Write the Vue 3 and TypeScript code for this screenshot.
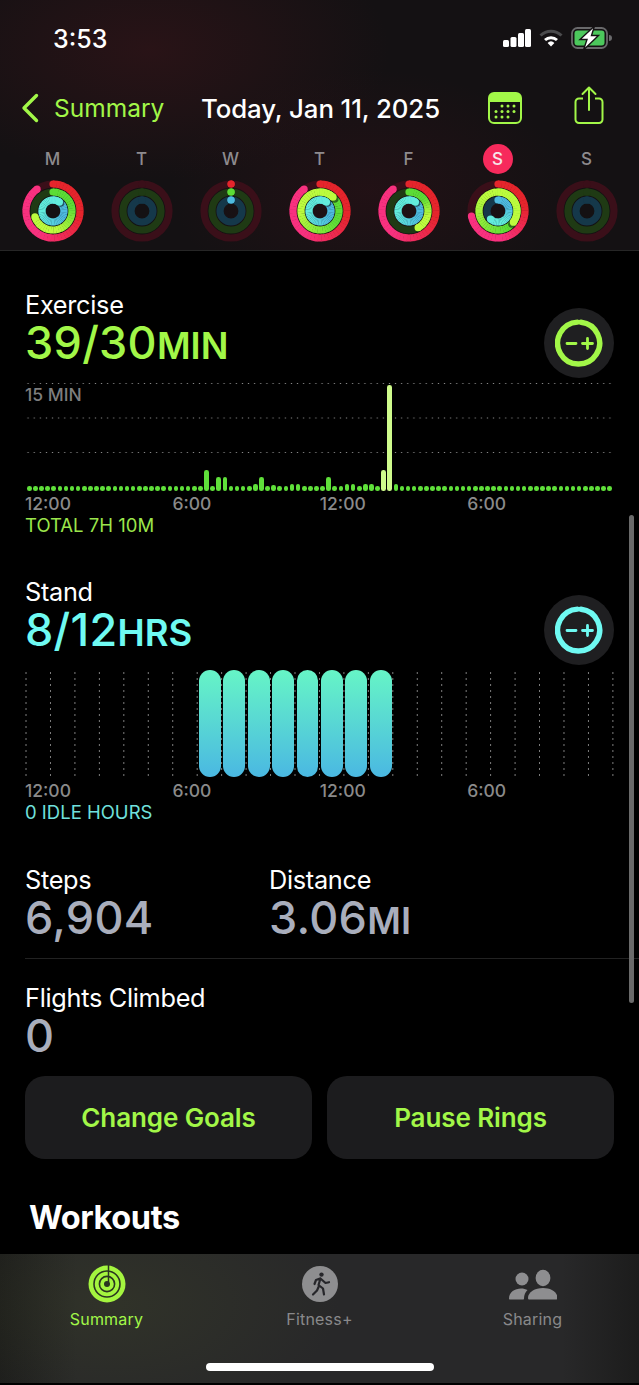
<template>
  <div class="phone">
    <header class="top">
      <div class="status">
        <span class="clock">3:53</span>
        <div class="status-icons">
          <svg width="28" height="18" viewBox="0 0 28 18">
            <rect x="0" y="11" width="6" height="7" rx="1.5" fill="#fff" />
            <rect x="7.5" y="8" width="6" height="10" rx="1.5" fill="#fff" />
            <rect x="15" y="4" width="6" height="14" rx="1.5" fill="#fff" />
            <rect x="22" y="0" width="6" height="18" rx="1.5" fill="#fff" />
          </svg>
          <svg width="24" height="18" viewBox="0 0 24 18">
            <path d="M1.5 6.5a15 15 0 0 1 21 0" fill="none" stroke="#4b4b4d" stroke-width="3" />
            <path d="M6 11a9 9 0 0 1 12 0" fill="none" stroke="#fff" stroke-width="3" />
            <path d="M12 17.500 8.600 13.900a5 5 0 0 1 6.800 0z" fill="#fff" />
          </svg>
          <svg width="41" height="22" viewBox="0 0 41 22">
            <rect x="1" y="1" width="35" height="20" rx="5.500" fill="none" stroke="#69696b" stroke-width="1.800" />
            <rect x="3.500" y="3.500" width="30" height="15" rx="3" fill="#4cc85c" />
            <path d="M38 8a3 3 0 0 1 0 6z" fill="#69696b" />
            <path d="M23.500 -1 9 12.500h7L12.500 23 27.500 8.500h-7z" fill="#fff" stroke="#141113" stroke-width="1.400" />
          </svg>
        </div>
      </div>

      <nav class="nav">
        <div class="back">
          <svg width="20" height="30" viewBox="0 0 20 30">
            <path d="M16.500 2.500 4 15l12.500 12.500" fill="none" stroke="#a2f748" stroke-width="3.400" stroke-linecap="round" stroke-linejoin="round" />
          </svg>
          <span>Summary</span>
        </div>
        <span class="date">Today, Jan 11, 2025</span>
        <svg class="cal" width="34" height="32" viewBox="0 0 34 32">
          <rect x="1" y="1" width="32" height="30" rx="5" fill="none" stroke="#a2f748" stroke-width="2" />
          <path d="M1 6a5 5 0 0 1 5-5h22a5 5 0 0 1 5 5v4H1z" fill="#a2f748" />
          <g fill="#a2f748">
            <circle v-for="d in calDots" :key="d.x + '-' + d.y" :cx="d.x" :cy="d.y" r="1.500" />
          </g>
        </svg>
        <svg class="share" width="30" height="38" viewBox="0 0 30 38">
          <path d="M9 12.500H5a3.500 3.500 0 0 0-3.500 3.500v17.500A3.500 3.500 0 0 0 5 37h20a3.500 3.500 0 0 0 3.500-3.500V16a3.500 3.500 0 0 0-3.500-3.500h-4" fill="none" stroke="#a2f748" stroke-width="2" />
          <path d="M15 24V1.500M8.500 8 15 1.500 21.500 8" fill="none" stroke="#a2f748" stroke-width="2" stroke-linecap="round" stroke-linejoin="round" />
        </svg>
      </nav>

      <div class="week">
        <div v-for="day in days" :key="day.id" class="day">
          <span class="letter" :class="{ today: day.today }">{{ day.letter }}</span>
          <svg width="62" height="62" viewBox="-31 -31 62 62">
            <g v-for="ring in day.rings" :key="ring.r">
              <circle :r="ring.r" fill="none" :stroke="ring.track" stroke-width="7.200" />
              <circle :cx="0" :cy="-ring.r" r="3.600" :fill="ring.from" />
              <path
                v-for="(seg, i) in ring.segments"
                :key="i"
                :d="seg.d"
                :stroke="seg.color"
                fill="none"
                stroke-width="7.200"
              />
              <circle v-if="ring.shadow" :cx="ring.shadow.x" :cy="ring.shadow.y" r="3.800" fill="#000" opacity="0.5" />
              <circle :cx="ring.tip.x" :cy="ring.tip.y" r="3.600" :fill="ring.to" />
            </g>
          </svg>
        </div>
      </div>
    </header>

    <main class="content">
      <section class="exercise">
        <div class="head">
          <div>
            <div class="label">Exercise</div>
            <div class="value lime">39/30<small>MIN</small></div>
          </div>
          <button class="goal" type="button">
            <svg width="48" height="48" viewBox="0 0 48 48">
              <path d="M26 3.200A21 21 0 1 1 22.500 3.100" fill="none" stroke="#a2f748" stroke-width="5.400" stroke-linecap="round" />
              <path d="M12 24.500h9M27.500 24.500h10M32.500 19.500v10" fill="none" stroke="#a2f748" stroke-width="2.800" stroke-linecap="round" />
            </svg>
          </button>
        </div>
        <div class="move-chart">
          <span class="chart-note">15 MIN</span>
          <div class="move-bars">
            <i
              v-for="(bar, i) in moveBars"
              :key="i"
              :class="{ pale: bar.pale }"
              :style="{ height: bar.height + 'px' }"
            ></i>
          </div>
        </div>
        <div class="axis"><span v-for="(t, i) in axis" :key="i">{{ t }}</span></div>
        <div class="total lime-soft">TOTAL 7H 10M</div>
      </section>

      <section class="stand">
        <div class="head">
          <div>
            <div class="label">Stand</div>
            <div class="value cyan">8/12<small>HRS</small></div>
          </div>
          <button class="goal" type="button">
            <svg width="48" height="48" viewBox="0 0 48 48">
              <path d="M26 3.200A21 21 0 1 1 22.500 3.100" fill="none" stroke="#6ffaf2" stroke-width="5.400" stroke-linecap="round" />
              <path d="M12 24.500h9M27.500 24.500h10M32.500 19.500v10" fill="none" stroke="#6ffaf2" stroke-width="2.800" stroke-linecap="round" />
            </svg>
          </button>
        </div>
        <div class="stand-chart">
          <div v-for="h in 24" :key="h" class="slot">
            <i v-if="h > 7 && h <= 15"></i>
          </div>
        </div>
        <div class="axis"><span v-for="(t, i) in axis" :key="i">{{ t }}</span></div>
        <div class="total cyan-soft">0 IDLE HOURS</div>
      </section>

      <section class="metrics">
        <div class="metric-row">
          <div class="metric">
            <div class="label">Steps</div>
            <div class="value grey">6,904</div>
          </div>
          <div class="metric">
            <div class="label">Distance</div>
            <div class="value grey">3.06<small>MI</small></div>
          </div>
        </div>
        <div class="rule"></div>
        <div class="label">Flights Climbed</div>
        <div class="value grey">0</div>
      </section>

      <div class="actions">
        <button type="button">Change Goals</button>
        <button type="button">Pause Rings</button>
      </div>

      <h2>Workouts</h2>
    </main>

    <div class="scrollbar"></div>

    <footer class="tabs">
      <div class="tab-row">
        <div class="tab active">
          <svg width="38" height="38" viewBox="0 0 38 38">
            <circle cx="19" cy="19" r="18.500" fill="#a4f53f" />
            <circle cx="19" cy="19" r="13" fill="none" stroke="#2a3520" stroke-width="1.600" />
            <circle cx="19" cy="19" r="7.600" fill="none" stroke="#2a3520" stroke-width="1.600" />
            <circle cx="19" cy="19" r="3" fill="#2a3520" />
            <path d="M20.500 0v17" stroke="#2a3520" stroke-width="1.500" />
          </svg>
          <span>Summary</span>
        </div>
        <div class="tab">
          <svg width="38" height="38" viewBox="0 0 38 38">
            <circle cx="19" cy="19" r="18" fill="#8e8e90" />
            <circle cx="20.500" cy="9.600" r="2.200" fill="#26262a" />
            <path d="M19.500 13.500 17.500 20l4.500 3.500 1 6M18 21l-2 4.500-4 4M20 14l4.500 4 3.500-.8M19 13.500l-4 1.500-1.500 4" fill="none" stroke="#26262a" stroke-width="2.200" stroke-linecap="round" stroke-linejoin="round" />
          </svg>
          <span>Fitness+</span>
        </div>
        <div class="tab">
          <svg width="48" height="38" viewBox="0 0 48 38">
            <circle cx="13" cy="14" r="6.500" fill="#8e8e90" />
            <ellipse cx="34" cy="13" rx="7.400" ry="8.200" fill="#8e8e90" />
            <path d="M0 33.500c0-6.500 6-10 12-10 2.500 0 4.700.5 6.500 1.600-2.200 2.300-3.500 5-3.500 8.400 0 .8-.3 1-1 1H1c-.7 0-1-.3-1-1z" fill="#8e8e90" />
            <path d="M19 33c0-6 7-10 15-10s14.500 4 14.500 10c0 1-.5 1.500-1.500 1.500H20.500c-1 0-1.500-.5-1.500-1.500z" fill="#8e8e90" />
          </svg>
          <span>Sharing</span>
        </div>
      </div>
      <div class="home"></div>
    </footer>
  </div>
</template>

<script setup lang="ts">
interface Pt {
  x: number
  y: number
}

interface Ring {
  r: number
  track: string
  from: string
  to: string
  segments: { d: string; color: string }[]
  tip: Pt
  shadow: Pt | null
}

const axis = ['12:00', '6:00', '12:00', '6:00']

const palette = [
  { r: 27, track: '#3a0f19', from: '#e5252c', to: '#f8317f' },
  { r: 19, track: '#1f3a14', from: '#5cdc36', to: '#bdfb3e' },
  { r: 11, track: '#15384a', from: '#4fbbe0', to: '#62ecdc' },
]

function hex(c: string): number[] {
  return [1, 3, 5].map((i) => parseInt(c.slice(i, i + 2), 16))
}

function mix(a: string, b: string, t: number): string {
  const [x, y] = [hex(a), hex(b)]
  return `rgb(${x.map((v, i) => Math.round(v + (y[i] - v) * t)).join(',')})`
}

function point(r: number, turn: number): Pt {
  const a = turn * Math.PI * 2
  return { x: r * Math.sin(a), y: -r * Math.cos(a) }
}

function buildRing(index: number, fraction: number): Ring {
  const p = palette[index]
  const steps = Math.ceil(fraction * 48)
  const segments = []
  for (let i = 0; i < steps; i++) {
    const a = point(p.r, (fraction * i) / steps)
    const b = point(p.r, (fraction * (i + 1)) / steps + 0.002)
    // colour holds at both ends and turns over around the middle of the arc
    const t = Math.min(1, Math.max(0, (i / steps - 0.3) / 0.35))
    segments.push({
      d: `M${a.x.toFixed(2)} ${a.y.toFixed(2)}A${p.r} ${p.r} 0 0 1 ${b.x.toFixed(2)} ${b.y.toFixed(2)}`,
      color: mix(p.from, p.to, t),
    })
  }
  return {
    ...p,
    segments,
    tip: point(p.r, fraction),
    shadow: fraction >= 1 ? point(p.r, fraction + 0.02) : null,
    to: fraction < 0.01 ? p.from : p.to,
  }
}

function emptyRing(index: number): Ring {
  const p = palette[index]
  return { ...p, segments: [], tip: point(p.r, 0), shadow: null, from: p.track, to: p.track }
}

const week: [string, number, number, number][] = [
  ['M', 0.9, 0.7, 1.1],
  ['T', 0, 0, 0],
  ['W', 0.001, 0.001, 0.001],
  ['T', 0.9, 1.12, 1.1],
  ['F', 0.9, 0.42, 1.1],
  ['S', 0.72, 1.35, 0.62],
  ['S', 0, 0, 0],
]

const days = week.map(([letter, a, b, c], i) => ({
  id: i,
  letter,
  today: i === 5,
  rings: [a, b, c].map((f, n) => (f === 0 ? emptyRing(n) : buildRing(n, f))),
}))

const calDots: Pt[] = []
for (let y = 0; y < 3; y++) {
  for (let x = 0; x < 4; x++) {
    if ((y === 0 && x === 0) || (y === 2 && x === 3)) continue
    calDots.push({ x: 8 + x * 6, y: 14 + y * 5.5 })
  }
}

// 96 quarter hours, most of them just a dot on the baseline
const moveHeights: Record<number, number> = {
  29: 21, 31: 14, 32: 14, 37: 7, 38: 14, 40: 6, 43: 7, 44: 7, 49: 14,
  52: 7, 53: 7, 55: 7, 56: 7, 58: 21, 59: 106, 60: 7,
}
const moveBars = Array.from({ length: 96 }, (_, i) => ({
  height: moveHeights[i] ?? 4.6,
  pale: i === 58 || i === 59,
}))
</script>

<style>
html,
body {
  margin: 0;
  background: #000;
}
</style>

<style scoped>
.phone {
  position: relative;
  display: flex;
  flex-direction: column;
  width: 639px;
  height: 1385px;
  overflow: hidden;
  background: #000;
  color: #fff;
  font-family: Inter, "Liberation Sans", sans-serif;
}

.top {
  flex: none;
  height: 250px;
  border-bottom: 1px solid #262626;
  background:
    radial-gradient(ellipse 240px 130px at 150px 50px, rgba(72, 22, 28, 0.4), transparent),
    radial-gradient(ellipse 200px 120px at 370px 190px, rgba(60, 18, 26, 0.35), transparent),
    #141113;
}

.status {
  display: flex;
  align-items: center;
  justify-content: space-between;
  height: 76px;
  padding: 0 27px 0 53px;
}

.clock {
  margin-top: 2px;
  font-size: 25px;
  font-weight: 500;
}

.status-icons {
  display: flex;
  align-items: center;
  gap: 8px;
}

.nav {
  display: flex;
  align-items: center;
  height: 64px;
  margin-bottom: 4px;
  padding-left: 20px;
}

.back {
  display: flex;
  align-items: center;
  gap: 14px;
  width: 181px;
  color: #a2f748;
  font-size: 24.5px;
}

.date {
  width: 287px;
  font-size: 25.8px;
  font-weight: 500;
  letter-spacing: -0.1px;
}

.share {
  margin: -6px 0 0 52px;
}

.week {
  display: grid;
  grid-template-columns: repeat(7, 89px);
  padding-left: 8px;
}

.day {
  display: flex;
  flex-direction: column;
  align-items: center;
  gap: 6px;
}

.letter {
  display: flex;
  align-items: center;
  justify-content: center;
  width: 30px;
  height: 30px;
  border-radius: 50%;
  color: #8e8b8e;
  font-size: 17px;
  font-weight: 500;
}

.letter.today {
  background: #f72a5c;
  color: #f6e6ea;
}

.content {
  flex: 1;
  min-height: 0;
  overflow: hidden;
  padding: 39px 25px 0;
}

.head {
  display: flex;
  justify-content: space-between;
  height: 88px;
}

.label {
  height: 30px;
  font-size: 25.3px;
  line-height: 30px;
  letter-spacing: -0.3px;
}

.value {
  height: 46px;
  font-size: 45px;
  font-weight: 500;
  line-height: 46px;
  letter-spacing: 0.3px;
}

.value small {
  font-size: 36.5px;
  font-weight: 600;
  letter-spacing: 0;
}

.lime {
  color: #a2f748;
}

.cyan {
  color: #6ffaf2;
}

.grey {
  color: #a9aebc;
}

.goal {
  display: flex;
  align-items: center;
  justify-content: center;
  align-self: flex-end;
  width: 70px;
  height: 70px;
  padding: 0;
  border: 0;
  border-radius: 50%;
  background: #1f1f21;
}

.move-chart {
  position: relative;
  height: 108px;
  margin-top: 5px;
  background:
    linear-gradient(#000, #000) bottom / 100% 20px no-repeat,
    radial-gradient(circle, #8f8f8f 0.5px, transparent 0.95px) 0 -16.75px / 6.13px 34.5px;
}

.chart-note {
  position: absolute;
  top: 3px;
  left: 0;
  background: #000;
  color: #7e7e7e;
  font-size: 17.5px;
  line-height: 18px;
  font-weight: 500;
}

.move-bars {
  position: absolute;
  inset: 0 2px 0 2px;
  display: flex;
  align-items: flex-end;
  justify-content: space-between;
}

.move-bars i {
  width: 4.6px;
  border-radius: 2.3px;
  background: #5fe03a;
}

.move-bars i.pale {
  background: #cffb8c;
}

.axis {
  display: grid;
  grid-template-columns: repeat(4, 147.4px);
  height: 26px;
  color: #8a8a8a;
  font-size: 17.5px;
  font-weight: 500;
  line-height: 26px;
}

.total {
  height: 16px;
  font-size: 18.5px;
  line-height: 16px;
}

.lime-soft {
  color: #9be64b;
}

.cyan-soft {
  color: #70e0dd;
}

.stand {
  margin-top: 44px;
}

.stand-chart {
  display: grid;
  grid-template-columns: repeat(24, 24.46px);
  height: 107px;
  margin: 5px 0 1px;
  background: radial-gradient(circle, #808080 0.5px, transparent 0.95px) -11.23px 0 / 24.46px 6px;
}

.slot {
  display: flex;
  padding-left: 2.6px;
}

.slot i {
  width: 22px;
  border-radius: 11px;
  background: linear-gradient(#66f5c6, #4ab8e2);
}

.metrics {
  margin-top: 45px;
}

.metric-row {
  display: flex;
}

.metric {
  width: 244px;
}

.rule {
  height: 1px;
  margin: 17px -25px 24px 0;
  background: #222;
}

.actions {
  display: grid;
  grid-template-columns: 287px 287px;
  gap: 15px;
  margin-top: 17px;
}

.actions button {
  height: 83px;
  padding: 0;
  border: 0;
  border-radius: 20px;
  background: #1c1c1e;
  color: #a2f748;
  font-family: inherit;
  font-size: 26px;
  font-weight: 600;
  letter-spacing: -0.1px;
}

h2 {
  margin: 39px 0 0 4px;
  font-size: 32.5px;
  font-weight: 700;
  line-height: 40px;
  letter-spacing: -0.4px;
}

.scrollbar {
  position: absolute;
  top: 515px;
  right: 5px;
  width: 5px;
  height: 488px;
  border-radius: 3px;
  background: #6a6a6a;
}

.tabs {
  flex: none;
  display: flex;
  flex-direction: column;
  align-items: center;
  height: 129px;
  margin-bottom: 2px;
  background:
    radial-gradient(ellipse 230px 120px at 110px 50px, rgba(78, 88, 40, 0.22), transparent),
    linear-gradient(90deg, #1c1c1c, #282829 12%, #282829 88%, #1c1c1c);
}

.tab-row {
  display: grid;
  grid-template-columns: repeat(3, 213px);
  width: 100%;
  height: 109px;
}

.tab {
  display: flex;
  flex-direction: column;
  align-items: center;
  padding-top: 11px;
  color: #89898b;
  font-size: 16px;
  line-height: 20px;
  letter-spacing: 0.2px;
}

.tab span {
  margin-top: 6px;
}

.tab.active {
  color: #a2f748;
}

.home {
  width: 228px;
  height: 8px;
  border-radius: 4px;
  background: #fff;
}
</style>
